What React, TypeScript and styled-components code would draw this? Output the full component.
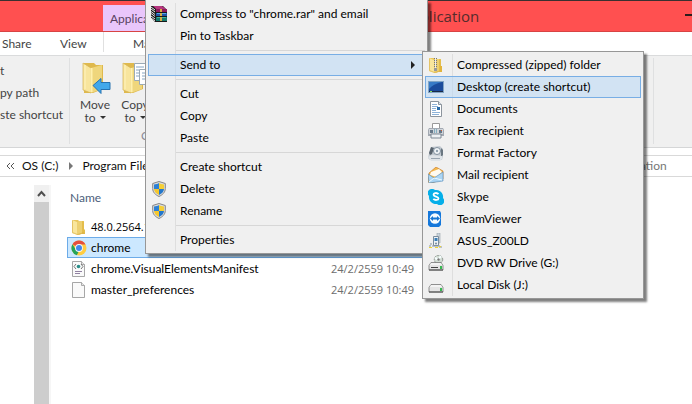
import React from "react";
import styled, { createGlobalStyle, css } from "styled-components";

const GlobalStyle = createGlobalStyle`
  * { box-sizing: border-box; }
  body { margin: 0; background: #fff; font-family: Lato, "Open Sans", sans-serif; font-size: 12px; line-height: 22px; color: #000; }
  button { font: inherit; color: inherit; background: none; border: 0; padding: 0; margin: 0; text-align: left; white-space: nowrap; }
  input { font: inherit; }
  svg { display: block; flex: none; }
`;

const Window = styled.div`
  position: relative;
  min-height: 100vh;
  overflow: hidden;
  display: flex;
  flex-direction: column;
  background: #fff;
`;

const TitleBar = styled.header`
  display: flex;
  height: 32px;
  padding-left: 103px;
  background: #ff5050;
  border-top: 1px solid #3a3030;
  border-bottom: 1px solid #d84444;
`;

const ToolTab = styled.div`
  width: 134px;
  margin-top: 4px;
  padding: 3px 7px;
  background: #e9c6fb;
  color: #57415f;
`;

const WindowTitle = styled.h1`
  flex: 1;
  margin: 0;
  padding-left: 164px;
  font-family: "Open Sans", sans-serif;
  font-size: 15px;
  font-weight: 400;
  line-height: 31px;
  color: #552c2c;
`;

const Minimize = styled.button`
  && { width: 7px; color: #2c1c1c; }
`;

const TabRow = styled.nav`
  display: flex;
  height: 24px;
  border-bottom: 1px solid #dadbdc;
  color: #444;
`;

const RibbonTab = styled.button<{ $width: number; $indent: number; $divided?: boolean }>`
  && {
    width: ${(p) => p.$width}px;
    height: 20px;
    padding-left: ${(p) => p.$indent}px;
    line-height: 24px;
    border-left: ${(p) => (p.$divided ? "1px solid #e0e0e0" : "0")};
  }
`;

const Ribbon = styled.section`
  display: flex;
  height: 92px;
  padding: 2px 38px 3px 0;
  background: #f0f0f0;
  border-bottom: 1px solid #d5d6d7;
  color: #444;
`;

const RibbonGroup = styled.div`
  flex: 1;
  display: flex;
  flex-direction: column;
  border-right: 1px solid #dfe0e1;
`;

const ClipboardList = styled(RibbonGroup)`
  flex: none;
  width: 70px;
  padding-top: 2px;
`;

const ToolRow = styled.div`
  display: flex;
  padding: 4px 0 0 5px;
  flex: 1;
`;

const LargeTool = styled.button`
  && {
    width: 40px;
    display: flex;
    flex-direction: column;
    align-items: center;
    line-height: 13px;
    text-align: center;
  }
  svg { margin-bottom: 4px; }
`;

const ToolCaption = styled.span`
  display: flex;
  align-items: center;
  gap: 4px;
`;

const Caret = styled.i`
  border: 3px solid transparent;
  border-top-color: #333;
  border-bottom: 0;
`;

const GroupLabel = styled.div`
  padding-left: 71px;
  line-height: 16px;
  color: #8a8a96;
`;

const AddressRow = styled.div`
  display: flex;
  gap: 8px;
  margin: 7px 0 8px;
`;

const Breadcrumb = styled.div`
  flex: 1;
  display: flex;
  align-items: center;
  height: 22px;
  padding-left: 6px;
  border: solid #d9d9d9;
  border-width: 1px 1px 1px 0;
`;

const Crumb = styled.a`
  color: #111;
  text-decoration: none;
`;

const Arrow = styled.svg`
  margin: 0 8px 0 11px;
`;

const Search = styled.input`
  width: 140px;
  height: 22px;
  padding: 0 0 0 16px;
  border: 1px solid #d9d9d9;
  border-right: 0;
  color: #777;
  &::placeholder { color: #777; opacity: 1; }
`;

const Content = styled.main`
  flex: 1;
  display: flex;
  padding-left: 34px;
`;

const ScrollTrack = styled.div`
  width: 17px;
  display: flex;
  flex-direction: column;
  background: #cdcdcd;
  border-right: 2px solid #f6f6f6;
`;

const ScrollButton = styled.button`
  && { height: 17px; padding: 0 0 0 3px; background: #f0f0f0; }
`;

const Files = styled.table`
  width: 500px;
  margin-left: 16px;
  align-self: flex-start;
  border-collapse: collapse;
  table-layout: fixed;
  th { padding: 2px 0 7px 3px; text-align: left; font-weight: 400; line-height: 22px; color: #4c607a; }
  td { height: 21px; padding: 0; line-height: 19px; white-space: nowrap; }
`;

const NameHead = styled.th`
  width: 260px;
`;

const FileRow = styled.tr<{ $selected?: boolean }>`
  ${(p) => p.$selected && css`
    background: #cce8ff;
    box-shadow: inset 0 0 0 1px #6cabe8;
  `}
`;

const numerals = css`
  font-family: "Open Sans", sans-serif;
  font-size: 11px;
`;

const FileName = styled.div<{ $numeric?: boolean }>`
  display: flex;
  align-items: center;
  gap: 4px;
  padding-left: 4px;
  ${(p) => p.$numeric && numerals}
`;

const DateCell = styled.td`
  && { padding-left: 4px; color: #6d6d6d; ${numerals} }
`;

const Menu = styled.div`
  position: absolute;
  padding: 2px;
  border: 1px solid #979797;
  background: linear-gradient(to right, transparent 27px, #dedede 27px, #dedede 28px, transparent 28px) content-box, #f0f0f0;
  box-shadow: 3px 3px 2px rgba(0, 0, 0, 0.5);
`;

const ContextMenu = styled(Menu)`
  left: 145px;
  top: 0;
  width: 283px;
  padding-top: 3px;
  border-top: 0;
`;

const SubMenu = styled(Menu)`
  left: 422px;
  top: 51px;
  width: 222px;
`;

const Item = styled.button<{ $active?: boolean }>`
  && {
    display: flex;
    align-items: center;
    width: 100%;
    height: 22px;
    line-height: 20px;
    border: 1px solid ${(p) => (p.$active ? "#78aee5" : "transparent")};
    background: ${(p) => (p.$active ? "rgba(180, 214, 245, 0.5)" : "none")};
  }
`;

const IconSlot = styled.span`
  flex: none;
  width: 31px;
  padding-left: 2px;
`;

const MenuText = styled.span`
  flex: 1;
`;

const Separator = styled.hr`
  height: 1px;
  margin: 3px 0 3px 28px;
  border: 0;
  background: #d7d7d7;
`;

function Icon({ children }: { children: React.ReactNode }) {
  return <svg width="16" height="16" viewBox="0 0 16 16" aria-hidden="true">{children}</svg>;
}

const FolderArt = ({ zip = false }: { zip?: boolean }) => (
  <Icon>
    <path d="M1 1h6l1 1h5v12l-5 2-7-2z" fill="#e9c65c" />
    <path d="M1 1l5 2v13l-5-2z" fill="#f9e69c" />
    <path d="M6 3l2-1h3v12l-5 2z" fill="#edd071" />
    <path d="M11 2l2 1v7l1 1v4h-3z" fill="#e4bd4a" />
    <path d="M1.500 1.500v12l5 2 5-1.500h2" fill="none" stroke="#d5ab42" strokeWidth=".6" />
    {zip && <><path d="M7.500 1v10" stroke="#777" strokeWidth="3" strokeDasharray="1 1" /><path d="M7.500 1v10" stroke="#eee" /><path d="M6 11h3v3H6z" fill="#999" /><path d="M12 9h2v6h-2z" fill="#e1b43c" /></>}
  </Icon>
);

const BooksArt = () => (
  <Icon>
    <path d="M0 0h12l4 4v12H4l-4-4z" fill="#191919" />
    <path d="M2 0h9l4 3H5z" fill="#b5357f" /><path d="M5 3h11v3H5z" fill="#8d1a5c" />
    <path d="M5 7h11v3H5z" fill="#1f57a8" /><path d="M6 7.500h9" stroke="#57a9e6" />
    <path d="M5 11h11v4H5z" fill="#16796d" /><path d="M6 11.500h9" stroke="#42b39f" />
    <path d="M0 1l4 3M0 3l4 3M0 5.500l4 3M0 7.500l4 3M0 10l4 3M0 12l4 3" stroke="#e8e8e8" />
    <path d="M9 3h2v3H9zM9 7h2v3H9zM9 11h2v4H9z" fill="#d4ae45" />
  </Icon>
);

const ShieldArt = () => (
  <Icon>
    <path d="M8 .5L14.300 2.500v5c0 4-3 6.500-6.300 8-3.300-1.500-6.300-4-6.300-8v-5z" fill="#dcdcdc" stroke="#858585" />
    <path d="M8 2v6H3V3.500C5 3.400 6.500 3 8 2z" fill="#2c80d5" />
    <path d="M8 2v6h5V3.500C11 3.400 9.500 3 8 2z" fill="#f5cf35" />
    <path d="M3 8h5v6C5 12.500 3.200 10.500 3 8z" fill="#f5c72e" />
    <path d="M13 8H8v6c3-1.500 4.800-3.500 5-6z" fill="#2377cb" />
  </Icon>
);

const DesktopArt = () => (
  <Icon><path d="M0 2h16v12H0z" fill="#82a5c5" /><path d="M1 3h14v10H1z" fill="#1b4c9c" /><path d="M1 10V3h13Q5 5 1 10z" fill="#377ac6" /><path d="M1 12h14v1H1z" fill="#1c2b48" /><path d="M2 12h2v1H2z" fill="#8be064" /></Icon>
);

const DocumentArt = () => (
  <Icon><path d="M2.500.5h8l3 3v12h-11z" fill="#fff" stroke="#8c949d" /><path d="M10.500.5v3h3" fill="#dbe5ef" stroke="#8c949d" /><path d="M4 3.500h5M4 5.500h6M4 7.500h4M4 9.500h4M4 11.500h8M4 13.500h7" stroke="#8db2d8" /><path d="M9 6h3v3H9z" fill="#276ba9" /></Icon>
);

const FaxArt = () => (
  <Icon><path d="M4.500 5V.5h7V5" fill="#fff" stroke="#999" /><path d="M1 5h14l1 2v6H0V7z" fill="#a3a9b2" /><path d="M1 6h14v5H1z" fill="#d1d5da" /><path d="M2 7h3v3H2zM11 7h3v3h-3z" fill="#667889" /><path d="M6 7h4M6 9h4" stroke="#3388a8" strokeDasharray="1 1" /><path d="M3 11h10v4H3z" fill="#edf1f4" stroke="#7c8793" /><path d="M13 7h1v1h-1z" fill="#d05c35" /></Icon>
);

const FactoryArt = () => (
  <Icon><path d="M3 2l9-1 3 3v7l-1 4H2l-2-2 1-5z" fill="#c3cad1" /><path d="M3 2l3 1-2 6-2 1-1-2z" fill="#59646e" /><circle cx="9" cy="6" r="3.500" fill="#f2f5f8" stroke="#7f8f9c" /><circle cx="9" cy="6" r="1.200" fill="#8ea0af" /><path d="M13 3l2 2v5l-2 2z" fill="#6a7680" /><path d="M0 12l4-2 10 1v3l-2 2H3z" fill="#dfe4e8" /><path d="M3 13.500h9" stroke="#98a4af" /></Icon>
);

const MailArt = () => (
  <Icon><path d="M1 6l7-6 7 4v8L4 16l-4-1z" fill="#f5b84c" stroke="#c57420" strokeWidth=".6" /><path d="M3 5l8-3 3 3-5 5-7-2z" fill="#fffaf0" /><path d="M0 7l6 4 9-6v9L1 16z" fill="#abd5f4" stroke="#5489b8" strokeWidth=".6" /><path d="M1 15l5-4 8 2" fill="none" stroke="#edf9ff" /></Icon>
);

const SkypeArt = () => (
  <Icon><path d="M4 0a4 4 0 0 1 3 1 7 7 0 0 1 8 8 4 4 0 0 1-6 6A7 7 0 0 1 1 7a4 4 0 0 1 3-7z" fill="#06afe9" /><path d="M10.500 5.200C9 3.400 5.500 3.700 5.600 5.800c.2 2.200 5 1.400 4.900 3.700-.1 1.800-3.600 2-5.200.4" fill="none" stroke="#fff" strokeWidth="1.800" /></Icon>
);

const TeamArt = () => (
  <Icon><path d="M0 0h12l1 2v12l-2 2H2l-2-2z" fill="#1578db" /><circle cx="7" cy="7.500" r="5.200" fill="#f5fbff" /><path d="M2 7.500L5 5v1.500h4V5l3 2.500L9 10V8.500H5V10z" fill="#1675d2" /></Icon>
);

const DeviceArt = () => (
  <Icon><path d="M9 0h3v10H9z" fill="#cbd5dd" stroke="#8a969f" strokeWidth=".5" /><path d="M5.500 3.500h5v9h-5z" fill="#edf2f6" stroke="#7a8c9c" /><path d="M6.500 5h3v3h-3z" fill="#397db5" /><circle cx="8" cy="10.500" r="1" fill="#778998" /><path d="M2 11h2M4 13h8M2 12v2M11 14h3" stroke="#8593a0" /><path d="M1 14.500h3M7 14.500h3M11 13.500h2" stroke="#f0d52e" /></Icon>
);

const DriveArt = ({ disc = false }: { disc?: boolean }) => (
  <Icon>
    {disc && <><circle cx="10.500" cy="4.500" r="4.200" fill="#d1dcd3" stroke="#868d88" strokeDasharray="2 1" /><path d="M10.500 4.500L13 1M10.500 4.500L7 3" stroke="#f7ffff" strokeWidth="2" /><circle cx="10.500" cy="4.500" r="1.200" fill="#777" /></>}
    <path d="M3 7.500h10l2 3v4.500H1v-4.500z" fill="#e4e4e4" stroke="#777" strokeWidth=".8" />
    <path d="M3 8h10l1 2H2z" fill="#f3f3f3" />
    <path d="M1 15h14" stroke="#444" />
    {disc && <path d="M3 12.500h7" stroke="#444" />}
    <path d="M12 11h2v3h-2z" fill="#36b850" />
  </Icon>
);

const ChromeArt = () => (
  <Icon><circle cx="8" cy="8" r="7.500" fill="#ffcd42" /><path d="M8 8L1.500 4.200A7.500 7.500 0 0 1 14.500 4.500H8z" fill="#e44f3f" /><path d="M1.500 4.200L5 10l3 1-2.200 4.200A7.500 7.500 0 0 1 1.500 4.200z" fill="#25a35a" /><circle cx="8" cy="8" r="3.900" fill="#f8f8f8" /><circle cx="8" cy="8" r="3" fill="#4289ed" /></Icon>
);

const FileArt = ({ code = false }: { code?: boolean }) => (
  <Icon><path d="M1.500.5h9l3 3v12h-12z" fill="#fafafa" stroke="#909090" strokeWidth=".8" /><path d="M10.500.5v3h3" fill="#e6e6e6" stroke="#999" strokeWidth=".8" />{code && <><path d="M5 3L3 5.500 5 8M10 3l2 2.500L10 8" fill="none" stroke="#777" /><circle cx="7.500" cy="5.500" r="1.800" fill="#298d88" /><path d="M4 10.500h7M4 12.500h5" stroke="#9282a2" /></>}</Icon>
);

const LargeFolder = ({ copy = false }: { copy?: boolean }) => (
  <svg width="32" height="32" viewBox="0 0 32 32" aria-hidden="true">
    <path d="M5 1h10l2 2h7v24l-10 4H5z" fill="#dfb94d" />
    <path d="M4 1l8 5v25l-8-3z" fill="#f8e59d" stroke="#d5b254" strokeWidth=".7" />
    <path d="M12 6l11-3v24l-11 4z" fill="#efd67c" />
    <path d="M12.500 6v24" stroke="#fff0ad" strokeWidth="2" /><path d="M6 3v24" stroke="#fff3bd" />
    {copy ? <><path d="M15.500 1.500h12v17h-12z" fill="#fff" stroke="#9baab6" /><path d="M20.500 7.500h12v15h-12z" fill="#fff" stroke="#9baab6" /><path d="M17 5h8M17 8h3M17 11h3M17 14h3M23 11h6M23 14h6M23 17h6" stroke="#88a6c3" /></> : <path d="M14 23.500l8-7v4h9v7h-9v4z" fill="#41a8eb" stroke="#2672b0" />}
  </svg>
);

const files = [
  { name: "48.0.2564.116", icon: <FolderArt />, date: "24/2/2559 10:49", numeric: true },
  { name: "chrome", icon: <ChromeArt />, date: "24/2/2559 10:49", selected: true },
  { name: "chrome.VisualElementsManifest", icon: <FileArt code />, date: "24/2/2559 10:49" },
  { name: "master_preferences", icon: <FileArt />, date: "24/2/2559 10:49" },
];

const groups: { label: string; icon?: React.ReactNode; sub?: boolean }[][] = [
  [{ label: 'Compress to "chrome.rar" and email', icon: <BooksArt /> }, { label: "Pin to Taskbar" }],
  [{ label: "Send to", sub: true }],
  [{ label: "Cut" }, { label: "Copy" }, { label: "Paste" }],
  [{ label: "Create shortcut" }, { label: "Delete", icon: <ShieldArt /> }, { label: "Rename", icon: <ShieldArt /> }],
  [{ label: "Properties" }],
];

const targets = [
  { label: "Compressed (zipped) folder", icon: <FolderArt zip /> },
  { label: "Desktop (create shortcut)", icon: <DesktopArt />, active: true },
  { label: "Documents", icon: <DocumentArt /> },
  { label: "Fax recipient", icon: <FaxArt /> },
  { label: "Format Factory", icon: <FactoryArt /> },
  { label: "Mail recipient", icon: <MailArt /> },
  { label: "Skype", icon: <SkypeArt /> },
  { label: "TeamViewer", icon: <TeamArt /> },
  { label: "ASUS_Z00LD", icon: <DeviceArt /> },
  { label: "DVD RW Drive (G:)", icon: <DriveArt disc /> },
  { label: "Local Disk (J:)", icon: <DriveArt /> },
];

export default function App() {
  return (
    <>
      <GlobalStyle />
      <Window>
        <TitleBar>
          <ToolTab>Application Tools</ToolTab>
          <WindowTitle>Application</WindowTitle>
          <Minimize aria-label="Minimize">
            <svg width="7" height="30" viewBox="0 0 7 30"><path d="M0 13h7v2H0z" fill="currentColor" /></svg>
          </Minimize>
        </TitleBar>
        <TabRow>
          <RibbonTab $width={60} $indent={2}>Share</RibbonTab>
          <RibbonTab $width={43} $indent={0}>View</RibbonTab>
          <RibbonTab $width={134} $indent={29} $divided>Manage</RibbonTab>
        </TabRow>
        <Ribbon>
          <ClipboardList>
            <button>t</button>
            <button>py path</button>
            <button>ste shortcut</button>
          </ClipboardList>
          <RibbonGroup>
            <ToolRow>
              <LargeTool><LargeFolder /><span>Move</span><ToolCaption>to <Caret /></ToolCaption></LargeTool>
              <LargeTool><LargeFolder copy /><span>Copy</span><ToolCaption>to <Caret /></ToolCaption></LargeTool>
            </ToolRow>
            <GroupLabel>Organize</GroupLabel>
          </RibbonGroup>
        </Ribbon>
        <AddressRow>
          <Breadcrumb>
            <svg width="16" height="10" viewBox="0 0 16 10"><path d="M4 2L1 5l3 3M8 2L5 5l3 3" fill="none" stroke="#555" /></svg>
            <Crumb href="#c">OS (C:)</Crumb>
            <Arrow width="5" height="8" viewBox="0 0 5 8"><path d="M0 0l4 4-4 4z" fill="#777" /></Arrow>
            <Crumb href="#pf">Program Files</Crumb>
          </Breadcrumb>
          <Search aria-label="Search" placeholder="Search Application" />
        </AddressRow>
        <Content>
          <ScrollTrack>
            <ScrollButton aria-label="Scroll up">
              <svg width="9" height="8" viewBox="0 0 9 8"><path d="M1 6l3.500-4L8 6" fill="none" stroke="#505050" strokeWidth="2" /></svg>
            </ScrollButton>
          </ScrollTrack>
          <Files>
            <thead><tr><NameHead>Name</NameHead><th>Date modified</th></tr></thead>
            <tbody>
              {files.map((f) => (
                <FileRow key={f.name} $selected={f.selected}>
                  <td><FileName $numeric={f.numeric}>{f.icon}{f.name}</FileName></td>
                  <DateCell>{f.date}</DateCell>
                </FileRow>
              ))}
            </tbody>
          </Files>
        </Content>
        <ContextMenu role="menu">
          {groups.map((g, i) => (
            <React.Fragment key={i}>
              {i > 0 && <Separator />}
              {g.map((it) => (
                <Item key={it.label} role="menuitem" $active={it.sub}>
                  <IconSlot>{it.icon}</IconSlot>
                  <MenuText>{it.label}</MenuText>
                  {it.sub && <Arrow width="5" height="8" viewBox="0 0 5 8"><path d="M0 0l4 4-4 4z" fill="#222" /></Arrow>}
                </Item>
              ))}
            </React.Fragment>
          ))}
        </ContextMenu>
        <SubMenu role="menu">
          {targets.map((t) => (
            <Item key={t.label} role="menuitem" $active={t.active}>
              <IconSlot>{t.icon}</IconSlot>
              <MenuText>{t.label}</MenuText>
            </Item>
          ))}
        </SubMenu>
      </Window>
    </>
  );
}
